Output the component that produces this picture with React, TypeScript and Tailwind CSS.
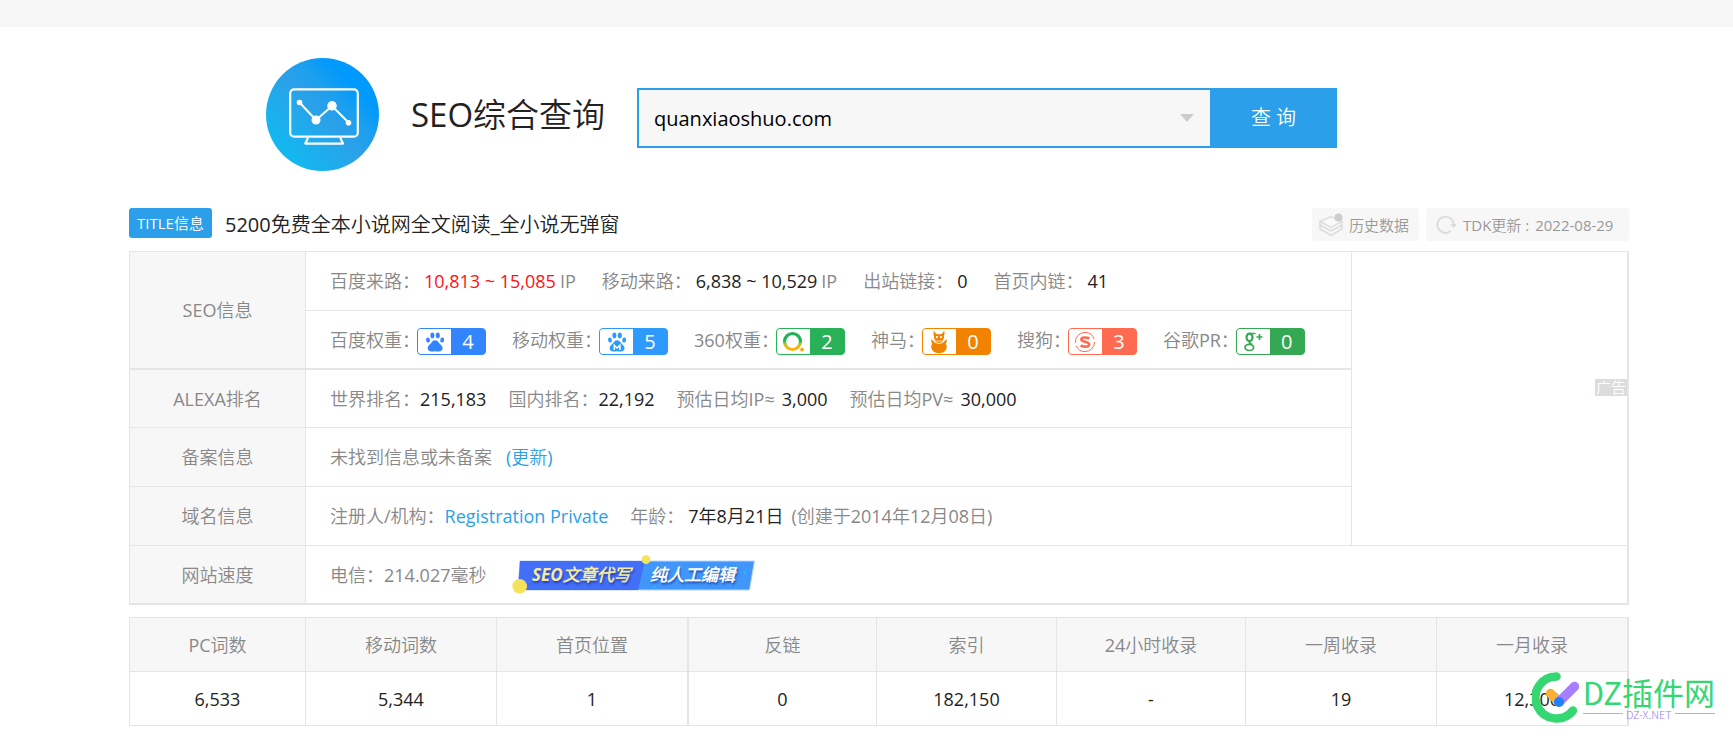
import type { ReactNode } from "react";

const GRAY = "text-[#888]";

function Logo() {
  return (
    <svg viewBox="0 0 113 113" className="size-[113px] shrink-0" aria-hidden="true">
      <defs>
        <linearGradient id="disc" x1="0.15" y1="0.85" x2="0.85" y2="0.15">
          <stop offset="0" stopColor="#12b8f0" />
          <stop offset="0.3" stopColor="#20abec" />
          <stop offset="0.5" stopColor="#2ba0e8" />
          <stop offset="0.7" stopColor="#1a9ff0" />
          <stop offset="0.88" stopColor="#0099fc" />
          <stop offset="1" stopColor="#0099ff" />
        </linearGradient>
      </defs>
      <circle cx="56.5" cy="56.5" r="56.5" fill="url(#disc)" />
      <g fill="none" stroke="#fff" strokeWidth="2.2" strokeLinejoin="round">
        <rect x="24.2" y="31.3" width="67.6" height="47.4" rx="4" />
        <path d="M42 80 L39.3 85.6 H77 L74.3 80" />
        <path d="M33.5 44.5 L50 62 L66 48 L82.5 64.5" strokeWidth="2" />
      </g>
      <g fill="#fff">
        <circle cx="33.5" cy="44.5" r="2.8" />
        <circle cx="50" cy="62" r="4.5" />
        <circle cx="66" cy="47.8" r="4.8" />
        <circle cx="82.5" cy="64.7" r="2.8" />
      </g>
    </svg>
  );
}

function Paw({ color, mobile }: { color: string; mobile?: boolean }) {
  return (
    <svg viewBox="0 0 20 20" className="size-5" fill={color} aria-hidden="true">
      <ellipse cx="7.4" cy="3.4" rx="2" ry="2.8" />
      <ellipse cx="12.8" cy="3.4" rx="2" ry="2.8" />
      <ellipse cx="3" cy="8" rx="1.9" ry="2.6" transform="rotate(-12 3 8)" />
      <ellipse cx="17.2" cy="8" rx="1.9" ry="2.6" transform="rotate(12 17.2 8)" />
      <path d="M10.1 8.2c1.9 0 2.9 1.3 3.9 2.8 1.1 1.5 3.6 2.7 3.6 5.1 0 2.2-1.6 3.5-3.6 3.5-1.5 0-2.5-.3-3.9-.3s-2.4.3-3.9.3c-2 0-3.6-1.3-3.6-3.5 0-2.4 2.5-3.6 3.6-5.1 1-1.5 2-2.8 3.9-2.8z" />
      {mobile && (
        <path d="M7.3 18v-4.8l2.8 2.8 2.8-2.8V18" fill="none" stroke="#fff" strokeWidth="1.5" />
      )}
    </svg>
  );
}

function Ring360() {
  return (
    <svg viewBox="0 0 22 22" className="size-[22px]" aria-hidden="true">
      <defs>
        <linearGradient id="ring" x1="0" y1="0" x2="0" y2="1">
          <stop offset="0.45" stopColor="#1fb254" />
          <stop offset="0.7" stopColor="#c9c22a" />
          <stop offset="0.9" stopColor="#fbb413" />
        </linearGradient>
      </defs>
      <circle cx="10.5" cy="10.5" r="8" fill="none" stroke="url(#ring)" strokeWidth="3.2" />
      <circle cx="20" cy="18.6" r="1.9" fill="#fba91a" />
    </svg>
  );
}

function Owl() {
  return (
    <svg viewBox="0 0 18 25" className="h-[24px] w-[18px]" fill="#f28300" aria-hidden="true">
      <path d="M3.6.5c.8 2 1.9 3 3.300 3.800h4.200C12.500 3.500 13.600 2.500 14.400.5c.6 2.700.3 4.700-.3 6.300.3 1.900-.4 3.400-1.600 4.300H5.500C4.300 10.200 3.600 8.700 3.900 6.800 3.300 5.200 3 3.200 3.600.5z" />
      <path d="M1.200 9c.8 1.800 2.400 2.800 4.300 3h7c1.900-.2 3.500-1.200 4.300-3 .5 2.300.2 3.900-.8 5.200.9 1 1.100 2.300 1.100 3.300 0 3.600-3.200 6.700-8.100 6.700S.9 21.100.9 17.500c0-1 .2-2.300 1.100-3.300C1 12.900.7 11.300 1.200 9z" />
      <circle cx="6.900" cy="7.400" r="1.200" fill="#fff" />
      <circle cx="11.100" cy="7.400" r="1.200" fill="#fff" />
      <path d="M3.500 11.800c1.800 1.500 3.700 2.200 5.500 2.200s3.700-.7 5.500-2.200" fill="none" stroke="#fff" strokeWidth="1" />
    </svg>
  );
}

function Sogou() {
  return (
    <svg viewBox="0 0 22 22" className="size-[22px]" aria-hidden="true">
      <circle cx="11" cy="11" r="9.6" fill="none" stroke="#ff6a50" strokeWidth="1" strokeDasharray="26 3 28 3" />
      <path
        d="M15.3 7.6C13.5 6.3 7.3 5.7 7.3 8.5c0 2.9 7.8 1.7 7.8 4.9 0 3.1-6.6 2.4-8.500 1"
        fill="none"
        stroke="#ff6a50"
        strokeWidth="2.6"
      />
    </svg>
  );
}

function GPlus() {
  return (
    <svg viewBox="0 0 22 22" className="size-[22px]" aria-hidden="true">
      <g fill="none" stroke="#34a853">
        <ellipse cx="7.5" cy="6.4" rx="3" ry="3.7" strokeWidth="2.2" />
        <path d="M8 2.5h5.5" strokeWidth="1.3" />
        <path d="M8 10.4c-1.5 1.4.2 2 1.8 3.1" strokeWidth="2" />
        <ellipse cx="7.3" cy="16.4" rx="4.3" ry="3.1" strokeWidth="1.7" />
        <path d="M17.5 3v6M14.500 6h6" strokeWidth="1.7" />
      </g>
    </svg>
  );
}

type RankProps = { label: string; value: number; icon: ReactNode; box: string };

function Rank({ label, value, icon, box }: RankProps) {
  return (
    <div className="flex items-center">
      <span>{label}</span>
      <a href="#" className={`mt-1 -ml-[3px] flex h-[27px] w-[69px] overflow-hidden rounded border ${box}`}>
        <span className="flex w-[33px] items-center justify-center bg-white">{icon}</span>
        <span className="flex flex-1 items-center justify-center text-[20px] leading-none text-white">
          {value}
        </span>
      </a>
    </div>
  );
}

const ranks: RankProps[] = [
  { label: "百度权重：", value: 4, icon: <Paw color="#3385ff" />, box: "border-[#3385ff] bg-[#3385ff]" },
  { label: "移动权重：", value: 5, icon: <Paw color="#2e9afe" mobile />, box: "border-[#2e9afe] bg-[#2e9afe]" },
  { label: "360权重：", value: 2, icon: <Ring360 />, box: "border-[#29b158] bg-[#29b158]" },
  { label: "神马：", value: 0, icon: <Owl />, box: "border-[#f28300] bg-[#f28300]" },
  { label: "搜狗：", value: 3, icon: <Sogou />, box: "border-[#ff6a50] bg-[#ff6a50]" },
  { label: "谷歌PR：", value: 0, icon: <GPlus />, box: "border-[#34a853] bg-[#34a853]" },
];

function Banner() {
  return (
    <a href="#" className="block">
      <svg viewBox="0 0 246 40" className="h-10 w-[246px]">
        <path d="M8 6H242.5L237.5 35H6z" fill="#4196fa" stroke="#b9d4fb" strokeWidth="1" />
        <path d="M8 6H133L126 35H6z" fill="#426ef8" />
        <circle cx="7.7" cy="31.3" r="7.3" fill="#f4e25b" />
        <circle cx="134" cy="4.7" r="4.4" fill="#f4e25b" />
        <circle cx="233" cy="17.5" r="1.4" fill="#1fbdf5" />
        <circle cx="142" cy="32" r="1.4" fill="#1fbdf5" />
        <g className="text-[17px] font-bold italic [text-shadow:1px_2px_2px_rgba(20,40,140,0.6)]">
          <text x="20" y="26" fill="#f5eaa0">SEO文章代写</text>
          <text x="138" y="26" fill="#fff">纯人工编辑</text>
        </g>
      </svg>
    </a>
  );
}

function Metric({
  label,
  value,
  unit,
  gap = "gap-0",
  tone = "text-[#222]",
}: {
  label: string;
  value: string;
  unit?: string;
  gap?: string;
  tone?: string;
}) {
  return (
    <span className={`flex ${gap}`}>
      <span>{label}</span>
      <span className={tone}>{value}</span>
      {unit && <span>{unit}</span>}
    </span>
  );
}

const TH = `border-r border-b border-[#e5e5e5] bg-[#f7f7f7] font-normal ${GRAY}`;
const TD = `border-r border-b border-[#e5e5e5] pl-6 ${GRAY}`;

const stats = [
  ["PC词数", "6,533", "w-[176px]"],
  ["移动词数", "5,344", "w-[191px]"],
  ["首页位置", "1", "w-[192px]"],
  ["反链", "0", "w-[188px]"],
  ["索引", "182,150", "w-[180px]"],
  ["24小时收录", "-", "w-[189px]"],
  ["一周收录", "19", "w-[191px]"],
  ["一月收录", "12,300", "w-[192px]"],
];

const edge = (i: number) => (i === 2 || i === 7 ? "border-r-2" : "border-r");

export default function App() {
  return (
    <div className="relative bg-white pb-3 font-['Open_Sans','Noto_Sans_CJK_SC_DemiLight','Noto_Sans_CJK_SC',sans-serif] text-[18px] leading-6 font-normal">
      <div className="h-[27px] bg-[#f6f6f6]" />

      <header className="flex items-center pt-[31px] pl-[266px]">
        <Logo />
        <h1 className="ml-8 w-[226px] shrink-0 text-[33px] leading-10 text-[#222]">SEO综合查询</h1>
        <form className="mt-[7px] flex h-[60px] w-[700px]" onSubmit={(e) => e.preventDefault()}>
          <div className="flex flex-1 items-center border-2 border-r-0 border-[#2b9fe9] bg-[#f7f7f7] pr-4">
            <input
              aria-label="域名"
              defaultValue="quanxiaoshuo.com"
              className="h-full min-w-0 flex-1 bg-transparent pl-[15px] text-[20px] text-black outline-none"
            />
            <svg viewBox="0 0 14 8" className="h-2 w-3.5" aria-hidden="true">
              <path d="M0 0H14L7 8z" fill="#ccc" />
            </svg>
          </div>
          <button type="submit" className="w-[127px] bg-[#2b9fe9] text-[20px] text-white">
            查 询
          </button>
        </form>
      </header>

      <main className="pr-[104px] pl-[129px]">
        <div className="mt-[37px] flex h-[33px] items-start">
          <span className="flex h-[30px] w-[83px] items-center justify-center rounded-[3px] bg-[#2b9fe9] text-[15px] text-white">
            TITLE信息
          </span>
          <h2 className="ml-[13px] pt-[3px] text-[20px] leading-7 text-[#222]">
            5200免费全本小说网全文阅读_全小说无弹窗
          </h2>
          <div className="ml-auto flex gap-[7px] text-[15px] text-[#999]">
            <a href="#" className="flex h-[33px] w-[107px] items-center gap-1.5 rounded-[3px] bg-[#f7f7f7] pl-[7px]">
              <svg viewBox="0 0 24 24" className="size-6" fill="none" stroke="#dcdcdc" strokeWidth="1.5" aria-hidden="true">
                <path d="M1 8.5 12 3.5 23 8.5 12 14.5z" fill="#f9f9f9" />
                <path d="M1 8.5v3.5l11 6 11-6V8.5M1 12v4l11 6.5L23 16v-4" />
                <circle cx="19.5" cy="4.5" r="4" fill="#ccc" stroke="none" />
              </svg>
              历史数据
            </a>
            <a href="#" className="flex h-[33px] w-[203px] items-center gap-1.5 rounded-[3px] bg-[#f7f7f7] pl-2.5">
              <svg viewBox="0 0 22 22" className="size-[21px]" fill="none" stroke="#dcdcdc" strokeWidth="2" aria-hidden="true">
                <path d="M15.5 17.8A8.5 8.5 0 1 1 18.5 11" />
                <path d="M15 10.5H22L18.5 15z" fill="#dcdcdc" stroke="none" />
              </svg>
              <span className="flex gap-1.5">
                <span>TDK更新 :</span>
                <span>2022-08-29</span>
              </span>
            </a>
          </div>
        </div>

        <table className="mt-2.5 w-full table-fixed border-separate border-spacing-0 border-t border-l border-[#e5e5e5]">
          <colgroup>
            <col className="w-[176px]" />
            <col />
            <col className="w-[277px]" />
          </colgroup>
          <tbody>
            <tr className="h-[59px]">
              <th rowSpan={2} className={`${TH} border-b-2`}>SEO信息</th>
              <td className={TD}>
                <div className="flex gap-[26px]">
                  <Metric gap="gap-1" label="百度来路：" value="10,813 ~ 15,085" unit="IP" tone="text-[#ff1111]" />
                  <Metric gap="gap-1" label="移动来路：" value="6,838 ~ 10,529" unit="IP" />
                  <Metric gap="gap-1" label="出站链接：" value="0" />
                  <Metric gap="gap-1" label="首页内链：" value="41" />
                </div>
              </td>
              <td rowSpan={5} className="border-r-2 border-b border-[#e5e5e5] pt-[127px] align-top">
                <span className="ml-auto block w-8 bg-[#dcdcdc] text-center text-[15px] leading-[17px] text-white">广告</span>
              </td>
            </tr>
            <tr className="h-[59px]">
              <td className={`${TD} border-b-2`}>
                <div className="flex gap-[26px]">
                  {ranks.map((r) => (
                    <Rank key={r.label} {...r} />
                  ))}
                </div>
              </td>
            </tr>
            <tr className="h-[58px]">
              <th className={TH}>ALEXA排名</th>
              <td className={TD}>
                <div className="flex gap-[22px]">
                  <Metric label="世界排名：" value="215,183" />
                  <Metric label="国内排名：" value="22,192" />
                  <Metric gap="gap-[7px]" label="预估日均IP≈" value="3,000" />
                  <Metric gap="gap-[7px]" label="预估日均PV≈" value="30,000" />
                </div>
              </td>
            </tr>
            <tr className="h-[59px]">
              <th className={TH}>备案信息</th>
              <td className={TD}>
                <div className="flex gap-3.5">
                  <span>未找到信息或未备案</span>
                  <a href="#" className="text-[#2b9fe9]">(更新)</a>
                </div>
              </td>
            </tr>
            <tr className="h-[59px]">
              <th className={TH}>域名信息</th>
              <td className={TD}>
                <div className="flex gap-[22px]">
                  <span className="flex">
                    注册人/机构：
                    <a href="#" className="text-[#2b9fe9]">Registration Private</a>
                  </span>
                  <span className="flex gap-2">
                    <Metric gap="gap-1" label="年龄：" value="7年8月21日" />
                    <span>(创建于2014年12月08日)</span>
                  </span>
                </div>
              </td>
            </tr>
            <tr className="h-[59px]">
              <th className={`${TH} border-b-2`}>网站速度</th>
              <td colSpan={2} className={`${TD} border-r-2 border-b-2`}>
                <div className="flex items-center gap-[26px]">
                  <Metric label="电信：" value="214.027毫秒" tone="text-[#888]" />
                  <Banner />
                </div>
              </td>
            </tr>
          </tbody>
        </table>

        <table className="mt-3 w-full table-fixed border-separate border-spacing-0 border-t border-l border-[#e5e5e5] text-center">
          <thead>
            <tr className="h-[54px]">
              {stats.map(([name, , width], i) => (
                <th key={name} className={`${width} ${edge(i)} border-b border-[#e5e5e5] bg-[#f7f7f7] font-normal ${GRAY}`}>
                  {name}
                </th>
              ))}
            </tr>
          </thead>
          <tbody>
            <tr className="h-[54px]">
              {stats.map(([name, value], i) => (
                <td key={name} className={`${edge(i)} border-b border-[#e5e5e5] text-[#222]`}>
                  {value}
                </td>
              ))}
            </tr>
          </tbody>
        </table>
      </main>

      <div className="absolute right-[18px] bottom-[15px] flex items-center gap-[3px]">
        <svg viewBox="0 0 48 51" className="h-[51px] w-12" fill="none" strokeLinecap="round" aria-hidden="true">
          <path d="M24.5 4.5A21 21 0 1 0 41 38.5" stroke="#35d772" strokeWidth="8.5" />
          <path d="M18.5 21.5 27 30" stroke="#fbb034" strokeWidth="9.5" />
          <path d="M27.5 29.5 42.5 14.5" stroke="#a57fff" strokeWidth="9.5" />
          <circle cx="27" cy="30" r="5" fill="#1e80ff" />
        </svg>
        <div className="font-['Noto_Sans_CJK_SC',sans-serif]">
          <div className="text-[31px] leading-8 text-[#35d772]">DZ插件网</div>
          <div className="flex items-center gap-[3px] text-[11px] leading-3 font-light text-[#9a80f0]">
            <span className="h-px flex-1 bg-[#b9a5ff]" />
            DZ-X.NET
            <span className="h-px flex-1 bg-[#b9a5ff]" />
          </div>
        </div>
      </div>
    </div>
  );
}
